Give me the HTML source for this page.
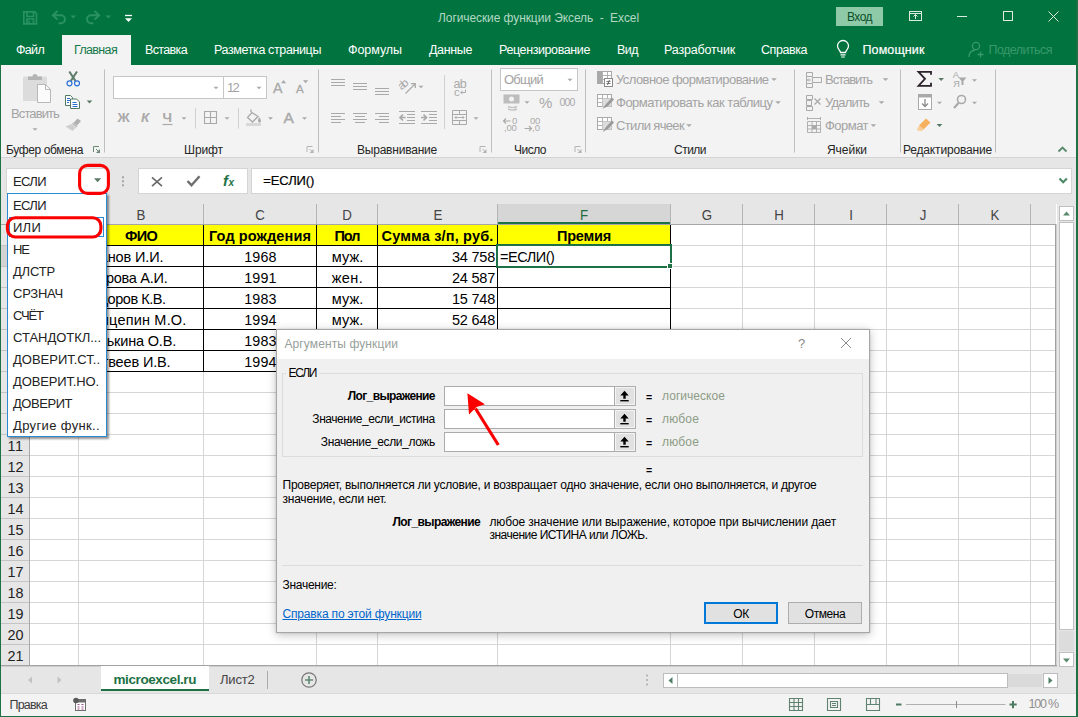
<!DOCTYPE html>
<html lang="ru"><head><meta charset="utf-8"><title>Логические функции Эксель - Excel</title>
<style>
html,body{margin:0;padding:0;}
html{width:1078px;height:717px;overflow:hidden;}
body{width:1078px;height:717px;overflow:hidden;position:relative;background:#fff;font-family:"Liberation Sans", "DejaVu Sans", sans-serif;font-size:12px;}
.a{position:absolute;box-sizing:border-box;}
.t{white-space:nowrap;}
svg{position:absolute;overflow:visible;}
</style></head><body>
<div class="a" style="left:0px;top:0px;width:1078px;height:65px;background:#01733e;"></div>
<svg style="left:0;top:0" width="140" height="34" viewBox="0 0 140 34">
<g fill="none" stroke="#2a9163" stroke-width="1.700">
<path d="M23.800 11.800h11l1.700 1.700v10.300h-12.700z"/><path d="M27 12v4.500h6.500v-4.500"/><path d="M27 23.500v-4.500h6.500v4.500"/><path d="M29 20.500v2.500" stroke-width="1.500"/>
</g>
<g fill="none" stroke="#2a9163" stroke-width="2">
<path d="M57.500 11l-4.700 4.300 4.700 4.300"/><path d="M53.500 15.300h7.500a4 4 0 0 1 0 8h-2.500"/>
<path d="M94.500 11l4.700 4.300-4.700 4.300"/><path d="M98.500 15.300h-7.500a4 4 0 0 0 0 8h2.500"/>
</g>
<path d="M70.500 15.500h5.600l-2.800 3z" fill="#2a9163"/><path d="M105.500 15.500h5.600l-2.800 3z" fill="#2a9163"/>
<path d="M125 15.500h7" stroke="#fff" stroke-width="1.300"/><path d="M125 18.300h7l-3.500 3.700z" fill="#fff"/>
</svg>
<div class="a t" style="top:7.90px;line-height:20px;font-size:12px;color:#b2d8c3;left:238.5px;width:600px;text-align:center;letter-spacing:-0.085px;white-space:pre;"><span id="t1">Логические функции Эксель  -  Excel</span></div>
<div class="a" style="left:836px;top:7px;width:47px;height:19px;background:#8ecaa8;"></div>
<div class="a t" style="top:6.50px;line-height:20px;font-size:12px;color:#0b4e2a;left:642.5px;width:434px;text-align:center;letter-spacing:-0.539px;"><span id="t2">Вход</span></div>
<svg style="left:905px;top:6px" width="160" height="22" viewBox="0 0 160 22">
<g fill="none" stroke="#d9ece2" stroke-width="1">
<rect x="4.500" y="5.500" width="12" height="9"/><path d="M4.500 7.500h12"/><path d="M10.500 13v-4.500M8.500 10.500l2-2 2 2"/>
<path d="M52 10.500h10"/>
<rect x="98.500" y="5.500" width="9" height="9"/>
<path d="M143.500 5.500l10 10M153.500 5.500l-10 10"/>
</g></svg>
<div class="a" style="left:62px;top:35px;width:69px;height:31px;background:#f3f3f3;"></div>
<div class="a t" style="top:40.40px;line-height:20px;font-size:12.5px;color:#fff;left:16px;letter-spacing:-0.684px;"><span id="t3">Файл</span></div>
<div class="a t" style="top:40.40px;line-height:20px;font-size:12.5px;color:#13794a;left:74px;letter-spacing:-0.654px;"><span id="t4">Главная</span></div>
<div class="a t" style="top:40.40px;line-height:20px;font-size:12.5px;color:#fff;left:145px;letter-spacing:-0.638px;"><span id="t5">Вставка</span></div>
<div class="a t" style="top:40.40px;line-height:20px;font-size:12.5px;color:#fff;left:214px;letter-spacing:-0.377px;"><span id="t6">Разметка страницы</span></div>
<div class="a t" style="top:40.40px;line-height:20px;font-size:12.5px;color:#fff;left:348px;letter-spacing:-0.058px;"><span id="t7">Формулы</span></div>
<div class="a t" style="top:40.40px;line-height:20px;font-size:12.5px;color:#fff;left:429px;letter-spacing:-0.362px;"><span id="t8">Данные</span></div>
<div class="a t" style="top:40.40px;line-height:20px;font-size:12.5px;color:#fff;left:499px;letter-spacing:-0.395px;"><span id="t9">Рецензирование</span></div>
<div class="a t" style="top:40.40px;line-height:20px;font-size:12.5px;color:#fff;left:617px;letter-spacing:-0.542px;"><span id="t10">Вид</span></div>
<div class="a t" style="top:40.40px;line-height:20px;font-size:12.5px;color:#fff;left:664px;letter-spacing:-0.173px;"><span id="t11">Разработчик</span></div>
<div class="a t" style="top:40.40px;line-height:20px;font-size:12.5px;color:#fff;left:761px;letter-spacing:-0.435px;"><span id="t12">Справка</span></div>
<svg style="left:836px;top:40px" width="14" height="19" viewBox="0 0 14 19">
<path d="M4.500 12.500c0-2-3-3.200-3-6.500a5.500 5.500 0 0 1 11 0c0 3.300-3 4.500-3 6.500z" fill="none" stroke="#fff" stroke-width="1.300"/>
<path d="M4.500 14.800h5M5.200 17h3.600" stroke="#fff" stroke-width="1.200"/></svg>
<div class="a t" style="top:40.00px;line-height:20px;font-size:12.5px;color:#fff;left:862.5px;letter-spacing:0.109px;-webkit-text-stroke:0.2px #fff;"><span id="t13">Помощник</span></div>
<svg style="left:968px;top:41px" width="17" height="18" viewBox="0 0 17 18">
<g fill="none" stroke="#38996c" stroke-width="1.300"><circle cx="8" cy="5" r="3.600"/><path d="M1 16c0-4 2.500-6.500 6-7"/><path d="M12.500 10.500v6M9.500 13.500h6"/></g></svg>
<div class="a t" style="top:40.00px;line-height:20px;font-size:12.5px;color:#38996c;left:988.5px;letter-spacing:-0.553px;"><span id="t14">Поделиться</span></div>
<div class="a" style="left:0px;top:65px;width:1078px;height:92px;background:#f3f3f3;"></div>
<div class="a" style="left:0px;top:157px;width:1078px;height:1px;background:#d4d4d4;"></div>
<svg style="left:0;top:0" width="1078" height="160" viewBox="0 0 1078 160"><path d="M104.5 69.500V152.500" stroke="#bebebe" stroke-width="1"/><path d="M318.5 69.500V152.500" stroke="#bebebe" stroke-width="1"/><path d="M491.5 69.500V152.500" stroke="#bebebe" stroke-width="1"/><path d="M585.5 69.500V152.500" stroke="#bebebe" stroke-width="1"/><path d="M794.5 69.500V152.500" stroke="#bebebe" stroke-width="1"/><path d="M900.5 69.500V152.500" stroke="#bebebe" stroke-width="1"/><path d="M995.5 69.500V152.500" stroke="#bebebe" stroke-width="1"/><path d="M444.500 75V129M195.500 108V128.500M238.500 108V128.500" stroke="#d0d0d0" stroke-width="1"/><path d="M93.5 152V146.500H99.0M96.0 149l3.500 3.500" fill="none" stroke="#6b8876" stroke-width="1"/><path d="M100.0 149v4h-4z" fill="#6b8876"/><path d="M307 152V146.500H312.5M309.5 149l3.500 3.500" fill="none" stroke="#b4b4b4" stroke-width="1"/><path d="M313.5 149v4h-4z" fill="#b4b4b4"/><path d="M480 152V146.500H485.5M482.5 149l3.500 3.500" fill="none" stroke="#b4b4b4" stroke-width="1"/><path d="M486.5 149v4h-4z" fill="#b4b4b4"/><path d="M575 152V146.500H580.5M577.5 149l3.500 3.500" fill="none" stroke="#b4b4b4" stroke-width="1"/><path d="M581.5 149v4h-4z" fill="#b4b4b4"/><rect x="23" y="76.500" width="24" height="24.500" rx="1" fill="#dcdcdc"/><path d="M28 80v-3.500h4.500a2.500 2.500 0 0 1 5 0h4.500v3.500z" fill="#b4b4b4"/><path d="M37.500 84.500h8l5 5v13h-13z" fill="#fbfbfb" stroke="#b8b8b8" stroke-width="1"/><path d="M45.500 84.500v5h5" fill="none" stroke="#b8b8b8"/><path d="M32.5 128.25h5.0l-2.5 2.5z" fill="#a9a9a9"/><path d="M69.300 71.500l6.200 9.500M77 71.500l-6.200 9.500" stroke="#5f7d6b" stroke-width="2.100" fill="none"/><circle cx="69.500" cy="83.300" r="2.500" fill="#f3f3f3" stroke="#2b70d9" stroke-width="1.200"/><circle cx="77" cy="83.300" r="2.500" fill="#f3f3f3" stroke="#2b70d9" stroke-width="1.200"/><path d="M65.500 95.500h5l2 2v8h-7z" fill="#fff" stroke="#4f7a60" stroke-width="1"/><path d="M67 98.500h3M67 100.500h3M67 102.500h2" stroke="#2b6fd0" stroke-width="1"/><path d="M70.500 99h6l3 3v6.500h-9z" fill="#fff" stroke="#4f7a60" stroke-width="1"/><path d="M72.500 102.500h4M72.500 104.500h5M72.500 106.500h5" stroke="#2b6fd0" stroke-width="1"/><path d="M86.7 100.6h5.6l-2.8 2.8z" fill="#5b7a66"/><path d="M77.500 118.500l3.500 2.500-4 4.500-3.500-2.500z" fill="#b0b0b0"/><path d="M73 122.500l4.500 3.500-1 1.500-4.500-3.500z" fill="#bcbcbc"/><path d="M71.500 124l4.500 3.500-3.500 3.500-7-4.500z" fill="#cfcfcf"/><rect x="113.500" y="76.500" width="110" height="22" fill="#fff" stroke="#c6c6c6"/><rect x="223.500" y="76.500" width="43" height="22" fill="#fff" stroke="#c6c6c6"/><path d="M213.5 86.75h5.0l-2.5 2.5z" fill="#a9a9a9"/><path d="M256.5 86.75h5.0l-2.5 2.5z" fill="#a9a9a9"/><path d="M281 83.300l2.600-3.300 2.600 3.300zM303 80.300h5.200l-2.600 3z" fill="#a9a9a9"/><path d="M162.500 124.500h10" stroke="#a9a9a9" stroke-width="1.200"/><path d="M181.5 117.25h5.0l-2.5 2.5z" fill="#a9a9a9"/><path d="M204.500 111.500h12v12h-12zM210.500 111.500v12M204.500 117.500h12" fill="none" stroke="#a9a9a9" stroke-width="1.100"/><path d="M224.5 117.25h5.0l-2.5 2.5z" fill="#a9a9a9"/><path d="M252 112.500l-4.500 5 5 4.500 5.500-5.500zM251 112v-2.500" fill="none" stroke="#a9a9a9" stroke-width="1.300"/><path d="M259 117c1.500 2 2 3 2 4a1.500 1.500 0 0 1-3 0c0-1 .5-2 1-4z" fill="#a9a9a9"/><rect x="246" y="123" width="15" height="3" fill="#d8d8d8"/><path d="M268.0 117.25h5.0l-2.5 2.5z" fill="#a9a9a9"/><path d="M302.0 117.25h5.0l-2.5 2.5z" fill="#a9a9a9"/><path d="M331 79.5h14M331 82.5h14M331 85.5h14" stroke="#a9a9a9" stroke-width="1" fill="none"/><path d="M353 83.5h14M353 86.5h14M353 89.5h14" stroke="#a9a9a9" stroke-width="1" fill="none"/><path d="M375 88.5h14M375 91.5h14M375 94.5h14" stroke="#a9a9a9" stroke-width="1" fill="none"/><path d="M331 113.5h14M331 116.5h10M331 119.5h14M331 122.5h10" stroke="#a9a9a9" stroke-width="1" fill="none"/><path d="M353.0 113.5h14M355.0 116.5h10M353.0 119.5h14M355.0 122.5h10" stroke="#a9a9a9" stroke-width="1" fill="none"/><path d="M375 113.5h14M379 116.5h10M375 119.5h14M379 122.5h10" stroke="#a9a9a9" stroke-width="1" fill="none"/><path d="M399 111.500h16M407 114.500h8M407 117.500h8M407 120.500h8M399 123.500h16" stroke="#a9a9a9" fill="none"/><path d="M405.500 117.500h-5.500M403 114.500l-3 3 3 3" stroke="#a9a9a9" fill="none" stroke-width="1.700"/><path d="M421 111.500h16M429 114.500h8M429 117.500h8M429 120.500h8M421 123.500h16" stroke="#a9a9a9" fill="none"/><path d="M421 117.500h5.500M423.500 114.500l3 3-3 3" stroke="#a9a9a9" fill="none" stroke-width="1.700"/><path d="M405.500 93.500l9.500-9.500M411 83.700h4.300v4.300" stroke="#a9a9a9" fill="none" stroke-width="1.200"/><path d="M418.5 85.75h5.0l-2.5 2.5z" fill="#a9a9a9"/><path d="M465.500 89.500v3h-4.500M462.500 91l-1.800 1.500 1.800 1.500" stroke="#a9a9a9" fill="none" stroke-width="1"/><path d="M452.500 110.500h14v14h-14zM452.500 114.500h14M452.500 120.500h14M459.500 110.500v4M459.500 120.500v4" fill="none" stroke="#a9a9a9"/><path d="M455 117.500h9M456.500 116l-1.500 1.500 1.500 1.500M462.500 116l1.500 1.500-1.500 1.500" fill="none" stroke="#a9a9a9" stroke-width="0.900"/><path d="M473.5 117.25h5.0l-2.5 2.5z" fill="#a9a9a9"/><rect x="500.500" y="68.500" width="77" height="22" fill="#fff" stroke="#c6c6c6"/><path d="M567.5 78.75h5.0l-2.5 2.5z" fill="#a9a9a9"/><rect x="503.500" y="94.500" width="16" height="9" fill="#bdbdbd"/><circle cx="511.500" cy="99" r="2.500" fill="#f3f3f3"/><path d="M508 106.500c3 1.500 6 1.500 9 0M508 109c3 1.500 6 1.500 9 0" stroke="#c4c4c4" fill="none" stroke-width="1.400"/><path d="M524.5 101.25h5.0l-2.5 2.5z" fill="#a9a9a9"/><path d="M503.500 121h7M506 118.500l-2.500 2.500 2.500 2.500" stroke="#a9a9a9" fill="none" stroke-width="1.200"/><path d="M524.500 128.500h7M529 126l2.500 2.500-2.500 2.500" stroke="#a9a9a9" fill="none" stroke-width="1.200"/><rect x="597.5" y="71.5" width="14" height="12" fill="#fff" stroke="#a9a9a9"/><path d="M597.5 75.5h14M597.5 79.5h14M602.5 71.5v12M607.5 71.5v12" stroke="#a9a9a9" fill="none" stroke-width="0.900"/><rect x="598" y="72" width="4" height="11" fill="#a9a9a9"/><rect x="604.5" y="78.5" width="8" height="8" fill="#fff" stroke="#8a8a8a"/><path d="M606.5 81.5h4M606.5 83.5h4M609.5 80l-2 5" stroke="#666" stroke-width="0.900"/><rect x="597.5" y="94.5" width="14" height="12" fill="#fff" stroke="#a9a9a9"/><path d="M597.5 98.5h14M597.5 102.5h14M602.5 94.5v12M607.5 94.5v12" stroke="#a9a9a9" fill="none" stroke-width="0.900"/><rect x="602.5" y="98.5" width="9" height="8" fill="#dcdcdc"/><path d="M612 97.5l-6 6.500-3.500 5 5.500-3 6-6.500z" fill="#9a9a9a"/><rect x="597.5" y="117.5" width="14" height="12" fill="#fff" stroke="#a9a9a9"/><path d="M597.5 121.5h14M597.5 125.5h14M602.5 117.5v12M607.5 117.5v12" stroke="#a9a9a9" fill="none" stroke-width="0.900"/><rect x="602.5" y="121.5" width="9" height="8" fill="#dcdcdc"/><path d="M612 120.5l-6 6.500-3.500 5 5.500-3 6-6.500z" fill="#9a9a9a"/><path d="M771.2 78.19999999999999h5.6l-2.8 2.8z" fill="#a9a9a9"/><path d="M775.2 101.19999999999999h5.6l-2.8 2.8z" fill="#a9a9a9"/><path d="M686.2 124.19999999999999h5.6l-2.8 2.8z" fill="#a9a9a9"/><path d="M806.500 72.500h6v4h-6zM806.500 83.500h6v4h-6zM812.500 77.500h9v5h-9zM806.500 76.500v7" fill="none" stroke="#a9a9a9"/><path d="M811 80h-4M809 78.500l-1.500 1.500 1.500 1.500" stroke="#a9a9a9" fill="none" stroke-width="0.900"/><path d="M806.500 95.500h6v4h-6zM806.500 106.500h6v4h-6zM806.500 100.500h5v5h-5z" fill="none" stroke="#a9a9a9"/><path d="M814.500 98.500l6 6M820.500 98.500l-6 6" stroke="#a9a9a9" stroke-width="1.300"/><path d="M807.500 121.500h13v11h-13zM807.500 125.500h13M807.500 129h13M812 121.500v11M816.500 121.500v11" fill="none" stroke="#a9a9a9" stroke-width="0.900"/><path d="M807 118.500h14M807.500 117v3M820.500 117v3" stroke="#a9a9a9" stroke-width="0.900" fill="none"/><rect x="812" y="125.500" width="4.500" height="3.500" fill="#a9a9a9"/><path d="M882.7 78.19999999999999h5.6l-2.8 2.8z" fill="#a9a9a9"/><path d="M878.7 101.19999999999999h5.6l-2.8 2.8z" fill="#a9a9a9"/><path d="M870.6 124.19999999999999h5.6l-2.8 2.8z" fill="#a9a9a9"/><path d="M931 74.800v-3h-12.500l6.500 7-6.500 7h12.500v-3" fill="none" stroke="#2b222b" stroke-width="1.800"/><path d="M938.4000000000001 78.1h5.6l-2.8 2.8z" fill="#5b7a66"/><path d="M958.500 77.500h8l-3 3.500v4h-2v-4z" fill="#a9a9a9"/><path d="M972.0 79.25h5.0l-2.5 2.5z" fill="#a9a9a9"/><rect x="918.500" y="94.500" width="13" height="15" fill="#fff" stroke="#a9a9a9"/><rect x="918.500" y="94.500" width="13" height="3" fill="#a9a9a9"/><path d="M925 99v7M922 103.500l3 3 3-3" stroke="#8a8a8a" fill="none" stroke-width="1.300"/><path d="M937.0 101.75h5.0l-2.5 2.5z" fill="#a9a9a9"/><circle cx="961.500" cy="99.500" r="4" fill="none" stroke="#a9a9a9" stroke-width="1.600"/><path d="M958.500 103l-4.500 5" stroke="#a9a9a9" stroke-width="2.200"/><path d="M972.0 101.75h5.0l-2.5 2.5z" fill="#a9a9a9"/><path d="M926 118.500l4.500 4-7 7-4.500-4z" fill="#f6b05e"/><path d="M919 125.500l4.500 4-1.500 1.500h-3.500l-1.500-1.500z" fill="#f9cf9c"/><path d="M936.7 124.1h5.6l-2.8 2.8z" fill="#4f7a62"/><path d="M1058.500 151.500l4-4 4 4" fill="none" stroke="#5c8a70" stroke-width="1.900"/></svg>
<div class="a t" style="top:104.00px;line-height:20px;font-size:13px;color:#a3a3a3;left:11px;letter-spacing:-0.889px;"><span id="t15">Вставить</span></div>
<div class="a t" style="top:77.50px;line-height:20px;font-size:13px;color:#a3a3a3;left:227px;letter-spacing:-1.734px;"><span id="t16">12</span></div>
<div class="a t" style="top:78.30px;line-height:20px;font-size:14.2px;color:#a9a9a9;left:273px;letter-spacing:0.531px;-webkit-text-stroke:0.3px #a9a9a9;"><span id="t17">A</span></div>
<div class="a t" style="top:79.30px;line-height:20px;font-size:11.6px;color:#a9a9a9;left:296px;letter-spacing:0.766px;-webkit-text-stroke:0.3px #a9a9a9;"><span id="t18">A</span></div>
<div class="a t" style="top:108.00px;line-height:20px;font-size:13.5px;color:#a9a9a9;font-weight:700;left:117.5px;letter-spacing:0.297px;"><span id="t19">Ж</span></div>
<div class="a t" style="top:108.00px;line-height:20px;font-size:13.5px;color:#a9a9a9;font-weight:700;font-style:italic;left:141px;letter-spacing:0.188px;"><span id="t20">К</span></div>
<div class="a t" style="top:107.50px;line-height:20px;font-size:13.5px;color:#a9a9a9;font-weight:700;left:162.5px;letter-spacing:0.500px;"><span id="t21">Ч</span></div>
<div class="a t" style="top:108.00px;line-height:20px;font-size:15.5px;color:#a9a9a9;left:283.5px;letter-spacing:0.156px;-webkit-text-stroke:0.45px #a9a9a9;"><span id="t22">A</span></div>
<div class="a t" style="top:74.50px;line-height:20px;font-size:11.5px;color:#a9a9a9;left:397.5px;letter-spacing:-2.508px;transform:rotate(-40deg);"><span id="t23">ab</span></div>
<div class="a t" style="top:73.50px;line-height:20px;font-size:12.5px;color:#a9a9a9;left:453.5px;letter-spacing:-0.703px;"><span id="t24">ab</span></div>
<div class="a t" style="top:81.50px;line-height:20px;font-size:11.5px;color:#a9a9a9;left:454px;"><span id="t25">c</span></div>
<div class="a t" style="top:70.00px;line-height:20px;font-size:13px;color:#a3a3a3;left:504px;letter-spacing:-0.756px;"><span id="t26">Общий</span></div>
<div class="a t" style="top:92.50px;line-height:20px;font-size:15px;color:#a9a9a9;left:539px;letter-spacing:-0.344px;"><span id="t27">%</span></div>
<div class="a t" style="top:91.80px;line-height:20px;font-size:10.5px;color:#a9a9a9;left:559.5px;letter-spacing:-0.844px;"><span id="t28">000</span></div>
<div class="a t" style="top:111.20px;line-height:20px;font-size:9.5px;color:#a9a9a9;left:512px;letter-spacing:-0.297px;"><span id="t29">0</span></div>
<div class="a t" style="top:118.30px;line-height:20px;font-size:9.5px;color:#a9a9a9;left:504px;letter-spacing:-0.240px;"><span id="t30">,00</span></div>
<div class="a t" style="top:111.20px;line-height:20px;font-size:9.5px;color:#a9a9a9;left:530px;letter-spacing:-0.289px;"><span id="t31">00</span></div>
<div class="a t" style="top:118.30px;line-height:20px;font-size:9.5px;color:#a9a9a9;left:532px;letter-spacing:0.031px;"><span id="t32">,0</span></div>
<div class="a t" style="top:70.00px;line-height:20px;font-size:13px;color:#a3a3a3;left:616px;letter-spacing:-0.560px;"><span id="t33">Условное форматирование</span></div>
<div class="a t" style="top:93.00px;line-height:20px;font-size:13px;color:#a3a3a3;left:616px;letter-spacing:-0.506px;"><span id="t34">Форматировать как таблицу</span></div>
<div class="a t" style="top:116.00px;line-height:20px;font-size:13px;color:#a3a3a3;left:616px;letter-spacing:-0.639px;"><span id="t35">Стили ячеек</span></div>
<div class="a t" style="top:70.00px;line-height:20px;font-size:13px;color:#a3a3a3;left:825px;letter-spacing:-1.014px;"><span id="t36">Вставить</span></div>
<div class="a t" style="top:93.00px;line-height:20px;font-size:13px;color:#a3a3a3;left:825px;letter-spacing:-0.806px;"><span id="t37">Удалить</span></div>
<div class="a t" style="top:116.00px;line-height:20px;font-size:13px;color:#a3a3a3;left:825px;letter-spacing:-0.531px;"><span id="t38">Формат</span></div>
<div class="a t" style="top:65.20px;line-height:20px;font-size:9.5px;color:#a9a9a9;left:952.8px;"><span id="t39">А</span></div>
<div class="a t" style="top:74.00px;line-height:20px;font-size:9.5px;color:#a9a9a9;left:953px;"><span id="t40">Я</span></div>
<div class="a t" style="top:139.60px;line-height:20px;font-size:12px;color:#262626;left:6px;letter-spacing:-0.379px;"><span id="t41">Буфер обмена</span></div>
<div class="a t" style="top:139.60px;line-height:20px;font-size:12px;color:#262626;left:184px;letter-spacing:-0.097px;"><span id="t42">Шрифт</span></div>
<div class="a t" style="top:139.60px;line-height:20px;font-size:12px;color:#262626;left:357px;letter-spacing:-0.217px;"><span id="t43">Выравнивание</span></div>
<div class="a t" style="top:139.60px;line-height:20px;font-size:12px;color:#262626;left:514px;letter-spacing:-0.503px;"><span id="t44">Число</span></div>
<div class="a t" style="top:139.60px;line-height:20px;font-size:12px;color:#262626;left:674px;letter-spacing:-0.516px;"><span id="t45">Стили</span></div>
<div class="a t" style="top:139.60px;line-height:20px;font-size:12px;color:#262626;left:827px;letter-spacing:-0.042px;"><span id="t46">Ячейки</span></div>
<div class="a t" style="top:139.60px;line-height:20px;font-size:12px;color:#262626;left:903px;letter-spacing:-0.173px;"><span id="t47">Редактирование</span></div>
<div class="a" style="left:0px;top:158px;width:1078px;height:46px;background:#e6e6e6;"></div>
<div class="a" style="left:6px;top:168px;width:102px;height:26px;background:#fff;border:1px solid #d4d4d4;"></div>
<div class="a t" style="top:171.80px;line-height:20px;font-size:13px;color:#222;left:13px;letter-spacing:-0.629px;"><span id="t48">ЕСЛИ</span></div>
<div class="a" style="left:138px;top:168px;width:110px;height:26px;background:#fff;border:1px solid #d4d4d4;"></div>
<div class="a" style="left:251px;top:168px;width:821px;height:26px;background:#fff;border:1px solid #d4d4d4;"></div>
<div class="a t" style="top:171.30px;line-height:20px;font-size:13px;color:#000;left:263.3px;letter-spacing:-0.109px;-webkit-text-stroke:0.2px #000;"><span id="t49">=ЕСЛИ()</span></div>
<svg style="left:0;top:160px" width="1078" height="40" viewBox="0 160 1078 40">
<path d="M94 178.200h7.200l-3.600 4z" fill="#5b7a66"/>
<path d="M122 176.300h2v2h-2zM122 180.300h2v2h-2zM122 184.300h2v2h-2z" fill="#a6a6a6"/>
<path d="M152 177.300l10 8.800M162 177.300l-10 8.800" stroke="#6a6a6a" stroke-width="1.700" fill="none"/>
<path d="M187.500 181l4 4.200 8-9" stroke="#6e6e6e" stroke-width="2.400" fill="none"/>
<path d="M1059.500 178.500l3.700 3.700 3.700-3.700" stroke="#4e8a68" stroke-width="2.200" fill="none"/>
</svg>
<div class="a t" style="top:170.50px;line-height:20px;font-size:15px;color:#1e7145;font-weight:700;font-style:italic;left:223px;font-family:"Liberation Serif",serif;"><span id="t50">f</span></div>
<div class="a t" style="top:173.00px;line-height:20px;font-size:10px;color:#1e7145;font-weight:700;font-style:italic;left:228.5px;font-family:"Liberation Serif",serif;"><span id="t51">x</span></div>
<div class="a" style="left:0px;top:204px;width:1056px;height:21px;background:#e6e6e6;"></div><div class="a" style="left:0px;top:204px;width:30px;height:462px;background:#e6e6e6;"></div><div class="a" style="left:30px;top:225px;width:1026px;height:441px;background:#fff;"></div><div class="a" style="left:79px;top:225px;width:591px;height:20px;background:#ffff00;"></div><div class="a" style="left:78px;top:225px;width:1px;height:441px;background:#d6d6d6;"></div><div class="a" style="left:203px;top:225px;width:1px;height:441px;background:#d6d6d6;"></div><div class="a" style="left:316px;top:225px;width:1px;height:441px;background:#d6d6d6;"></div><div class="a" style="left:377px;top:225px;width:1px;height:441px;background:#d6d6d6;"></div><div class="a" style="left:497px;top:225px;width:1px;height:441px;background:#d6d6d6;"></div><div class="a" style="left:670px;top:225px;width:1px;height:441px;background:#d6d6d6;"></div><div class="a" style="left:742px;top:225px;width:1px;height:441px;background:#d6d6d6;"></div><div class="a" style="left:814px;top:225px;width:1px;height:441px;background:#d6d6d6;"></div><div class="a" style="left:886px;top:225px;width:1px;height:441px;background:#d6d6d6;"></div><div class="a" style="left:958px;top:225px;width:1px;height:441px;background:#d6d6d6;"></div><div class="a" style="left:1030px;top:225px;width:1px;height:441px;background:#d6d6d6;"></div><div class="a" style="left:30px;top:245px;width:1026px;height:1px;background:#d6d6d6;"></div><div class="a" style="left:30px;top:266px;width:1026px;height:1px;background:#d6d6d6;"></div><div class="a" style="left:30px;top:287px;width:1026px;height:1px;background:#d6d6d6;"></div><div class="a" style="left:30px;top:308px;width:1026px;height:1px;background:#d6d6d6;"></div><div class="a" style="left:30px;top:329px;width:1026px;height:1px;background:#d6d6d6;"></div><div class="a" style="left:30px;top:350px;width:1026px;height:1px;background:#d6d6d6;"></div><div class="a" style="left:30px;top:371px;width:1026px;height:1px;background:#d6d6d6;"></div><div class="a" style="left:30px;top:392px;width:1026px;height:1px;background:#d6d6d6;"></div><div class="a" style="left:30px;top:413px;width:1026px;height:1px;background:#d6d6d6;"></div><div class="a" style="left:30px;top:434px;width:1026px;height:1px;background:#d6d6d6;"></div><div class="a" style="left:30px;top:455px;width:1026px;height:1px;background:#d6d6d6;"></div><div class="a" style="left:30px;top:476px;width:1026px;height:1px;background:#d6d6d6;"></div><div class="a" style="left:30px;top:497px;width:1026px;height:1px;background:#d6d6d6;"></div><div class="a" style="left:30px;top:518px;width:1026px;height:1px;background:#d6d6d6;"></div><div class="a" style="left:30px;top:539px;width:1026px;height:1px;background:#d6d6d6;"></div><div class="a" style="left:30px;top:560px;width:1026px;height:1px;background:#d6d6d6;"></div><div class="a" style="left:30px;top:581px;width:1026px;height:1px;background:#d6d6d6;"></div><div class="a" style="left:30px;top:602px;width:1026px;height:1px;background:#d6d6d6;"></div><div class="a" style="left:30px;top:623px;width:1026px;height:1px;background:#d6d6d6;"></div><div class="a" style="left:30px;top:644px;width:1026px;height:1px;background:#d6d6d6;"></div><div class="a" style="left:30px;top:665px;width:1026px;height:1px;background:#d6d6d6;"></div><div class="a" style="left:29px;top:204px;width:1px;height:20px;background:#b4b4b4;"></div><div class="a" style="left:78px;top:204px;width:1px;height:20px;background:#b4b4b4;"></div><div class="a" style="left:203px;top:204px;width:1px;height:20px;background:#b4b4b4;"></div><div class="a" style="left:316px;top:204px;width:1px;height:20px;background:#b4b4b4;"></div><div class="a" style="left:377px;top:204px;width:1px;height:20px;background:#b4b4b4;"></div><div class="a" style="left:497px;top:204px;width:1px;height:20px;background:#b4b4b4;"></div><div class="a" style="left:670px;top:204px;width:1px;height:20px;background:#b4b4b4;"></div><div class="a" style="left:742px;top:204px;width:1px;height:20px;background:#b4b4b4;"></div><div class="a" style="left:814px;top:204px;width:1px;height:20px;background:#b4b4b4;"></div><div class="a" style="left:886px;top:204px;width:1px;height:20px;background:#b4b4b4;"></div><div class="a" style="left:958px;top:204px;width:1px;height:20px;background:#b4b4b4;"></div><div class="a" style="left:1030px;top:204px;width:1px;height:20px;background:#b4b4b4;"></div><div class="a" style="left:0px;top:224px;width:29px;height:1px;background:#c4c4c4;"></div><div class="a" style="left:0px;top:245px;width:29px;height:1px;background:#c4c4c4;"></div><div class="a" style="left:0px;top:266px;width:29px;height:1px;background:#c4c4c4;"></div><div class="a" style="left:0px;top:287px;width:29px;height:1px;background:#c4c4c4;"></div><div class="a" style="left:0px;top:308px;width:29px;height:1px;background:#c4c4c4;"></div><div class="a" style="left:0px;top:329px;width:29px;height:1px;background:#c4c4c4;"></div><div class="a" style="left:0px;top:350px;width:29px;height:1px;background:#c4c4c4;"></div><div class="a" style="left:0px;top:371px;width:29px;height:1px;background:#c4c4c4;"></div><div class="a" style="left:0px;top:392px;width:29px;height:1px;background:#c4c4c4;"></div><div class="a" style="left:0px;top:413px;width:29px;height:1px;background:#c4c4c4;"></div><div class="a" style="left:0px;top:434px;width:29px;height:1px;background:#c4c4c4;"></div><div class="a" style="left:0px;top:455px;width:29px;height:1px;background:#c4c4c4;"></div><div class="a" style="left:0px;top:476px;width:29px;height:1px;background:#c4c4c4;"></div><div class="a" style="left:0px;top:497px;width:29px;height:1px;background:#c4c4c4;"></div><div class="a" style="left:0px;top:518px;width:29px;height:1px;background:#c4c4c4;"></div><div class="a" style="left:0px;top:539px;width:29px;height:1px;background:#c4c4c4;"></div><div class="a" style="left:0px;top:560px;width:29px;height:1px;background:#c4c4c4;"></div><div class="a" style="left:0px;top:581px;width:29px;height:1px;background:#c4c4c4;"></div><div class="a" style="left:0px;top:602px;width:29px;height:1px;background:#c4c4c4;"></div><div class="a" style="left:0px;top:623px;width:29px;height:1px;background:#c4c4c4;"></div><div class="a" style="left:0px;top:644px;width:29px;height:1px;background:#c4c4c4;"></div><div class="a" style="left:0px;top:665px;width:29px;height:1px;background:#c4c4c4;"></div><div class="a" style="left:29px;top:225px;width:1px;height:441px;background:#a8a8a8;"></div><div class="a" style="left:0px;top:224px;width:1056px;height:1px;background:#a6a6a6;"></div><div class="a" style="left:498px;top:204px;width:172px;height:20px;background:#d6d6d6;"></div><div class="a" style="left:498px;top:222px;width:172px;height:2px;background:#1e7145;"></div><div class="a" style="left:0px;top:246px;width:29px;height:20px;background:#d3d3d3;"></div><div class="a" style="left:27px;top:246px;width:2px;height:20px;background:#1e7145;"></div><div class="a t" style="top:205.20px;line-height:20px;font-size:14.3px;color:#444;left:2.0px;width:104px;text-align:center;transform:scaleX(.93);"><span id="t52">A</span></div><div class="a t" style="top:205.20px;line-height:20px;font-size:14.3px;color:#444;left:2.0px;width:278px;text-align:center;transform:scaleX(.93);"><span id="t53">B</span></div><div class="a t" style="top:205.20px;line-height:20px;font-size:14.3px;color:#444;left:2.0px;width:516px;text-align:center;transform:scaleX(.93);"><span id="t54">C</span></div><div class="a t" style="top:205.20px;line-height:20px;font-size:14.3px;color:#444;left:47.0px;width:600px;text-align:center;transform:scaleX(.93);"><span id="t55">D</span></div><div class="a t" style="top:205.20px;line-height:20px;font-size:14.3px;color:#444;left:137.5px;width:600px;text-align:center;transform:scaleX(.93);"><span id="t56">E</span></div><div class="a t" style="top:205.20px;line-height:20px;font-size:14.3px;color:#1e6b41;left:284.0px;width:600px;text-align:center;transform:scaleX(.93);"><span id="t57">F</span></div><div class="a t" style="top:205.20px;line-height:20px;font-size:14.3px;color:#444;left:406.5px;width:600px;text-align:center;transform:scaleX(.93);"><span id="t58">G</span></div><div class="a t" style="top:205.20px;line-height:20px;font-size:14.3px;color:#444;left:480.5px;width:596px;text-align:center;transform:scaleX(.93);"><span id="t59">H</span></div><div class="a t" style="top:205.20px;line-height:20px;font-size:14.3px;color:#444;left:624.5px;width:452px;text-align:center;transform:scaleX(.93);"><span id="t60">I</span></div><div class="a t" style="top:205.20px;line-height:20px;font-size:14.3px;color:#444;left:768.5px;width:308px;text-align:center;transform:scaleX(.93);"><span id="t61">J</span></div><div class="a t" style="top:205.20px;line-height:20px;font-size:14.3px;color:#444;left:912.5px;width:164px;text-align:center;transform:scaleX(.93);"><span id="t62">K</span></div><div class="a t" style="top:226.40px;line-height:20px;font-size:14.4px;color:#222;right:1054.6px;letter-spacing:0.184px;"><span id="t63">1</span></div><div class="a t" style="top:247.40px;line-height:20px;font-size:14.4px;color:#222;right:1054.6px;letter-spacing:0.184px;"><span id="t64">2</span></div><div class="a t" style="top:268.40px;line-height:20px;font-size:14.4px;color:#222;right:1054.6px;letter-spacing:0.184px;"><span id="t65">3</span></div><div class="a t" style="top:289.40px;line-height:20px;font-size:14.4px;color:#222;right:1054.6px;letter-spacing:0.184px;"><span id="t66">4</span></div><div class="a t" style="top:310.40px;line-height:20px;font-size:14.4px;color:#222;right:1054.6px;letter-spacing:0.184px;"><span id="t67">5</span></div><div class="a t" style="top:331.40px;line-height:20px;font-size:14.4px;color:#222;right:1054.6px;letter-spacing:0.184px;"><span id="t68">6</span></div><div class="a t" style="top:352.40px;line-height:20px;font-size:14.4px;color:#222;right:1054.6px;letter-spacing:0.184px;"><span id="t69">7</span></div><div class="a t" style="top:373.40px;line-height:20px;font-size:14.4px;color:#222;right:1054.6px;letter-spacing:0.184px;"><span id="t70">8</span></div><div class="a t" style="top:394.40px;line-height:20px;font-size:14.4px;color:#222;right:1054.6px;letter-spacing:0.184px;"><span id="t71">9</span></div><div class="a t" style="top:415.40px;line-height:20px;font-size:14.4px;color:#222;right:1054.6px;letter-spacing:-0.008px;"><span id="t72">10</span></div><div class="a t" style="top:436.40px;line-height:20px;font-size:14.4px;color:#222;right:1054.6px;letter-spacing:0.523px;"><span id="t73">11</span></div><div class="a t" style="top:457.40px;line-height:20px;font-size:14.4px;color:#222;right:1054.6px;letter-spacing:-0.008px;"><span id="t74">12</span></div><div class="a t" style="top:478.40px;line-height:20px;font-size:14.4px;color:#222;right:1054.6px;letter-spacing:-0.008px;"><span id="t75">13</span></div><div class="a t" style="top:499.40px;line-height:20px;font-size:14.4px;color:#222;right:1054.6px;letter-spacing:-0.008px;"><span id="t76">14</span></div><div class="a t" style="top:520.40px;line-height:20px;font-size:14.4px;color:#222;right:1054.6px;letter-spacing:-0.008px;"><span id="t77">15</span></div><div class="a t" style="top:541.40px;line-height:20px;font-size:14.4px;color:#222;right:1054.6px;letter-spacing:-0.008px;"><span id="t78">16</span></div><div class="a t" style="top:562.40px;line-height:20px;font-size:14.4px;color:#222;right:1054.6px;letter-spacing:-0.008px;"><span id="t79">17</span></div><div class="a t" style="top:583.40px;line-height:20px;font-size:14.4px;color:#222;right:1054.6px;letter-spacing:-0.008px;"><span id="t80">18</span></div><div class="a t" style="top:604.40px;line-height:20px;font-size:14.4px;color:#222;right:1054.6px;letter-spacing:-0.008px;"><span id="t81">19</span></div><div class="a t" style="top:625.40px;line-height:20px;font-size:14.4px;color:#222;right:1054.6px;letter-spacing:-0.008px;"><span id="t82">20</span></div><div class="a t" style="top:646.40px;line-height:20px;font-size:14.4px;color:#222;right:1054.6px;letter-spacing:-0.008px;"><span id="t83">21</span></div><div class="a" style="left:78px;top:225px;width:1px;height:147px;background:#000;"></div><div class="a" style="left:203px;top:225px;width:1px;height:147px;background:#000;"></div><div class="a" style="left:316px;top:225px;width:1px;height:147px;background:#000;"></div><div class="a" style="left:377px;top:225px;width:1px;height:147px;background:#000;"></div><div class="a" style="left:497px;top:225px;width:1px;height:147px;background:#000;"></div><div class="a" style="left:670px;top:225px;width:1px;height:147px;background:#000;"></div><div class="a" style="left:78px;top:245px;width:593px;height:1px;background:#000;"></div><div class="a" style="left:78px;top:266px;width:593px;height:1px;background:#000;"></div><div class="a" style="left:78px;top:287px;width:593px;height:1px;background:#000;"></div><div class="a" style="left:78px;top:308px;width:593px;height:1px;background:#000;"></div><div class="a" style="left:78px;top:329px;width:593px;height:1px;background:#000;"></div><div class="a" style="left:78px;top:350px;width:593px;height:1px;background:#000;"></div><div class="a" style="left:78px;top:371px;width:593px;height:1px;background:#000;"></div><div class="a t" style="top:226.00px;line-height:20px;font-size:14.5px;color:#000;font-weight:700;left:2.0px;width:278px;text-align:center;letter-spacing:-0.693px;"><span id="t84">ФИО</span></div><div class="a t" style="top:226.00px;line-height:20px;font-size:14.5px;color:#000;font-weight:700;left:2.0px;width:516px;text-align:center;letter-spacing:0.116px;"><span id="t85">Год рождения</span></div><div class="a t" style="top:226.00px;line-height:20px;font-size:14.5px;color:#000;font-weight:700;left:47.0px;width:600px;text-align:center;letter-spacing:-1.047px;"><span id="t86">Пол</span></div><div class="a t" style="top:226.00px;line-height:20px;font-size:14.5px;color:#000;font-weight:700;left:137.5px;width:600px;text-align:center;letter-spacing:0.169px;"><span id="t87">Сумма з/п, руб.</span></div><div class="a t" style="top:226.00px;line-height:20px;font-size:14.5px;color:#000;font-weight:700;left:284.0px;width:600px;text-align:center;letter-spacing:-0.211px;"><span id="t88">Премия</span></div><div class="a t" style="top:247.00px;line-height:20px;font-size:14.5px;color:#000;right:914.5px;letter-spacing:-0.112px;"><span id="t89">Иванов И.И.</span></div><div class="a t" style="top:247.00px;line-height:20px;font-size:14.3px;color:#000;left:2.5px;width:516px;text-align:center;letter-spacing:0.172px;"><span id="t90">1968</span></div><div class="a t" style="top:247.00px;line-height:20px;font-size:14.5px;color:#000;left:47.5px;width:600px;text-align:center;letter-spacing:0.055px;"><span id="t91">муж.</span></div><div class="a t" style="top:247.00px;line-height:20px;font-size:14.5px;color:#000;right:583px;letter-spacing:-0.227px;"><span id="t92">34 758</span></div><div class="a t" style="top:268.00px;line-height:20px;font-size:14.5px;color:#000;right:910.5px;letter-spacing:-0.255px;"><span id="t93">Петрова А.И.</span></div><div class="a t" style="top:268.00px;line-height:20px;font-size:14.3px;color:#000;left:2.5px;width:516px;text-align:center;letter-spacing:0.172px;"><span id="t94">1991</span></div><div class="a t" style="top:268.00px;line-height:20px;font-size:14.5px;color:#000;left:47.5px;width:600px;text-align:center;letter-spacing:0.422px;"><span id="t95">жен.</span></div><div class="a t" style="top:268.00px;line-height:20px;font-size:14.5px;color:#000;right:583px;letter-spacing:-0.227px;"><span id="t96">24 587</span></div><div class="a t" style="top:289.00px;line-height:20px;font-size:14.5px;color:#000;right:912.5px;letter-spacing:-0.470px;"><span id="t97">Сидоров К.В.</span></div><div class="a t" style="top:289.00px;line-height:20px;font-size:14.3px;color:#000;left:2.5px;width:516px;text-align:center;letter-spacing:0.172px;"><span id="t98">1983</span></div><div class="a t" style="top:289.00px;line-height:20px;font-size:14.5px;color:#000;left:47.5px;width:600px;text-align:center;letter-spacing:0.055px;"><span id="t99">муж.</span></div><div class="a t" style="top:289.00px;line-height:20px;font-size:14.5px;color:#000;right:583px;letter-spacing:-0.227px;"><span id="t100">15 748</span></div><div class="a t" style="top:310.00px;line-height:20px;font-size:14.5px;color:#000;right:891.5px;letter-spacing:0.177px;"><span id="t101">Прицепин М.О.</span></div><div class="a t" style="top:310.00px;line-height:20px;font-size:14.3px;color:#000;left:2.5px;width:516px;text-align:center;letter-spacing:0.172px;"><span id="t102">1994</span></div><div class="a t" style="top:310.00px;line-height:20px;font-size:14.5px;color:#000;left:47.5px;width:600px;text-align:center;letter-spacing:0.055px;"><span id="t103">муж.</span></div><div class="a t" style="top:310.00px;line-height:20px;font-size:14.5px;color:#000;right:583px;letter-spacing:-0.227px;"><span id="t104">52 648</span></div><div class="a t" style="top:331.00px;line-height:20px;font-size:14.5px;color:#000;right:902px;letter-spacing:-0.181px;"><span id="t105">Редькина О.В.</span></div><div class="a t" style="top:331.00px;line-height:20px;font-size:14.3px;color:#000;left:2.5px;width:516px;text-align:center;letter-spacing:0.172px;"><span id="t106">1983</span></div><div class="a t" style="top:331.00px;line-height:20px;font-size:14.5px;color:#000;left:47.5px;width:600px;text-align:center;letter-spacing:0.422px;"><span id="t107">жен.</span></div><div class="a t" style="top:331.00px;line-height:20px;font-size:14.5px;color:#000;right:583px;letter-spacing:-0.227px;"><span id="t108">41 200</span></div><div class="a t" style="top:352.00px;line-height:20px;font-size:14.5px;color:#000;right:907.5px;letter-spacing:-0.141px;"><span id="t109">Матвеев И.В.</span></div><div class="a t" style="top:352.00px;line-height:20px;font-size:14.3px;color:#000;left:2.5px;width:516px;text-align:center;letter-spacing:0.172px;"><span id="t110">1994</span></div><div class="a t" style="top:352.00px;line-height:20px;font-size:14.5px;color:#000;left:47.5px;width:600px;text-align:center;letter-spacing:0.055px;"><span id="t111">муж.</span></div><div class="a t" style="top:352.00px;line-height:20px;font-size:14.5px;color:#000;right:583px;letter-spacing:-0.227px;"><span id="t112">38 950</span></div><div class="a t" style="top:247.00px;line-height:20px;font-size:14.5px;color:#000;left:500px;letter-spacing:-0.462px;"><span id="t113">=ЕСЛИ()</span></div><div class="a" style="left:496px;top:244px;width:176px;height:24px;border:2px solid #1e7145;"></div><div class="a" style="left:667px;top:263px;width:6px;height:6px;background:#1e7145;border:1px solid #fff;"></div><div class="a" style="left:1055px;top:224px;width:1px;height:442px;background:#a0a0a0;"></div><div class="a" style="left:1056px;top:224px;width:1px;height:442px;background:#cfcfcf;"></div><div class="a" style="left:0px;top:665px;width:1057px;height:1px;background:#a3a3a3;"></div><div class="a" style="left:0px;top:666px;width:1057px;height:1px;background:#cdcdcd;"></div><div class="a" style="left:1057px;top:204px;width:21px;height:463px;background:#e6e6e6;"></div><div class="a" style="left:1059px;top:206px;width:15px;height:15px;background:#fff;border:1px solid #c0c0c0;"></div><div class="a" style="left:1059px;top:222px;width:15px;height:408px;background:#fff;border:1px solid #c0c0c0;"></div><div class="a" style="left:1059px;top:631px;width:15px;height:20px;background:#dcdcdc;"></div><div class="a" style="left:1059px;top:652px;width:15px;height:15px;background:#fff;border:1px solid #c0c0c0;"></div><svg style="left:1059px;top:206px" width="15" height="461" viewBox="0 0 15 461"><path d="M4 9.500h7l-3.500-4zM4 452.500h7l-3.500 4z" fill="#5a8a6e"/></svg>
<div class="a" style="left:0px;top:667px;width:1078px;height:27px;background:#e6e6e6;"></div>
<div class="a" style="left:101px;top:666px;width:108px;height:25px;background:#fff;"></div>
<div class="a" style="left:101px;top:689px;width:108px;height:2px;background:#1e7145;"></div>
<div class="a t" style="top:669.50px;line-height:20px;font-size:13.5px;color:#1e7145;font-weight:700;left:113.5px;letter-spacing:-0.407px;"><span id="t114">microexcel.ru</span></div>
<div class="a t" style="top:669.50px;line-height:20px;font-size:13px;color:#444;left:220px;letter-spacing:-0.197px;"><span id="t115">Лист2</span></div>
<div class="a" style="left:267px;top:671px;width:1px;height:18px;background:#ababab;"></div>
<svg style="left:0;top:667px" width="1078" height="50" viewBox="0 667 1078 50">
<path d="M32 676.500v7l-4-3.500zM57.500 676.500v7l4-3.500z" fill="#c2c2c2"/>
<circle cx="309" cy="680" r="7.200" fill="none" stroke="#767676" stroke-width="1.200"/>
<path d="M305 680h8M309 676v8" stroke="#5f8a72" stroke-width="1.600"/>
<circle cx="647" cy="675.500" r="1" fill="#a8a8a8"/><circle cx="647" cy="680" r="1" fill="#a8a8a8"/><circle cx="647" cy="684.500" r="1" fill="#a8a8a8"/>
<rect x="663.500" y="673.500" width="14" height="14" fill="#fff" stroke="#bdbdbd"/>
<rect x="677.500" y="673.500" width="330" height="14" fill="#fff" stroke="#bdbdbd"/>
<rect x="1008" y="674" width="34" height="13" fill="#dadada"/>
<rect x="1043.500" y="673.500" width="14" height="14" fill="#fff" stroke="#bdbdbd"/>
<path d="M672.500 677v7l-4-3.500zM1048.500 677v7l4-3.500z" fill="#4f7f66"/>
</svg>
<div class="a" style="left:0px;top:694px;width:1078px;height:23px;background:#f3f3f3;"></div>
<div class="a" style="left:0px;top:693px;width:1078px;height:1px;background:#d8d8d8;"></div>
<div class="a t" style="top:694.60px;line-height:20px;font-size:12.5px;color:#3c3c3c;left:9.5px;letter-spacing:-0.789px;"><span id="t116">Правка</span></div>
<svg style="left:0;top:694px" width="1078" height="23" viewBox="0 694 1078 23">
<rect x="75.500" y="699.500" width="10" height="11" fill="#fff" stroke="#6e6e6e"/><rect x="75" y="699" width="11" height="3.500" fill="#6e6e6e"/>
<path d="M77.500 704.500h2M81.500 704.500h2M77.500 707h2M81.500 707h2M77.500 709h2M81.500 709h2" stroke="#a0508c" stroke-width="1.200"/>
<circle cx="76" cy="700.500" r="2.800" fill="#5a5a5a"/>
<g fill="none" stroke="#5f8370" stroke-width="1.100">
<path d="M789.500 698.500h13v12h-13zM789.500 702.500h13M789.500 706.500h13M794 698.500v12M798.500 698.500v12"/>
<path d="M827.500 698.500h13v12h-13zM830.500 701.500h7v6h-7zM832 703.500h4M832 705.500h4"/>
<path d="M866.500 698.500h13v12h-13zM870.500 698.500v6h5.500v-6M866.500 704.500h13"/>
</g>
<path d="M896 704.500h5.500" stroke="#4f7a62" stroke-width="2"/>
<path d="M906 704.500h99.500" stroke="#b0b0b0" stroke-width="1"/>
<path d="M956.500 701v7" stroke="#8a8a8a" stroke-width="1"/>
<path d="M1009.500 704.500h7.200M1013 701v7.200" stroke="#4f7a62" stroke-width="2"/>
</svg>
<div class="a t" style="top:694.00px;line-height:20px;font-size:12.5px;color:#8f8f8f;left:1028.5px;letter-spacing:-1.191px;"><span id="t117">100 %</span></div>
<div class="a" style="left:0px;top:65px;width:1px;height:652px;background:#1e7145;"></div>
<div class="a" style="left:1076px;top:0px;width:2px;height:717px;background:#1e7145;"></div>
<div class="a" style="left:0px;top:716px;width:1078px;height:1px;background:#1e7145;"></div>
<div class="a" style="left:7px;top:193px;width:100px;height:244px;background:#fff;border:1px solid #2a8ad4;box-shadow:2px 2px 2px rgba(0,0,0,.42);"></div>
<div class="a t" style="top:195.80px;line-height:20px;font-size:13px;color:#222;left:13px;letter-spacing:-0.629px;"><span id="t118">ЕСЛИ</span></div>
<div class="a t" style="top:217.80px;line-height:20px;font-size:13px;color:#222;left:13px;letter-spacing:0.260px;"><span id="t119">ИЛИ</span></div>
<div class="a t" style="top:239.80px;line-height:20px;font-size:13px;color:#222;left:13px;letter-spacing:-1.031px;"><span id="t120">НЕ</span></div>
<div class="a t" style="top:261.80px;line-height:20px;font-size:13px;color:#222;left:13px;letter-spacing:-0.181px;"><span id="t121">ДЛСТР</span></div>
<div class="a t" style="top:283.80px;line-height:20px;font-size:13px;color:#222;left:13px;letter-spacing:-0.224px;"><span id="t122">СРЗНАЧ</span></div>
<div class="a t" style="top:305.80px;line-height:20px;font-size:13px;color:#222;left:13px;letter-spacing:-1.062px;"><span id="t123">СЧЁТ</span></div>
<div class="a t" style="top:327.80px;line-height:20px;font-size:13px;color:#222;left:13px;letter-spacing:-0.027px;"><span id="t124">СТАНДОТКЛ...</span></div>
<div class="a t" style="top:349.80px;line-height:20px;font-size:13px;color:#222;left:13px;letter-spacing:-0.007px;"><span id="t125">ДОВЕРИТ.СТ..</span></div>
<div class="a t" style="top:371.80px;line-height:20px;font-size:13px;color:#222;left:13px;letter-spacing:-0.136px;"><span id="t126">ДОВЕРИТ.НО.</span></div>
<div class="a t" style="top:393.80px;line-height:20px;font-size:13px;color:#222;left:13px;letter-spacing:-0.460px;"><span id="t127">ДОВЕРИТ</span></div>
<div class="a t" style="top:415.80px;line-height:20px;font-size:13px;color:#222;left:13px;letter-spacing:0.356px;"><span id="t128">Другие функ..</span></div>
<div class="a" style="left:9px;top:217px;width:95px;height:20px;border:1px solid #2a8ad4;"></div>
<svg style="left:0;top:160px" width="120" height="85" viewBox="0 160 120 85">
<rect x="79.600" y="165.400" width="28.800" height="28" rx="8" fill="none" stroke="#fb0000" stroke-width="3.100"/>
<rect x="7.400" y="217.800" width="93.500" height="19.200" rx="8" fill="none" stroke="#fb0000" stroke-width="3.100"/>
</svg>
<div class="a" style="left:276px;top:329px;width:594px;height:304px;background:#f0f0f0;border:1px solid #a6a6a6;box-shadow:0 2px 9px rgba(0,0,0,.24),0 0 2px rgba(0,0,0,.15);"></div>
<div class="a" style="left:277px;top:330px;width:592px;height:29px;background:#fff;"></div>
<div class="a t" style="top:334.00px;line-height:20px;font-size:12px;color:#97a09a;left:284.5px;letter-spacing:0.098px;"><span id="t129">Аргументы функции</span></div>
<div class="a t" style="top:333.50px;line-height:20px;font-size:13px;color:#8a8a8a;left:798px;"><span id="t130">?</span></div>
<svg style="left:840px;top:337px" width="12" height="12" viewBox="0 0 12 12"><path d="M1 1l10 10M11 1l-10 10" stroke="#8a8a8a" stroke-width="1" fill="none"/></svg>
<div class="a" style="left:282px;top:373px;width:581px;height:84px;border:1px solid #dcdcdc;"></div>
<div class="a" style="left:286px;top:366px;width:33px;height:14px;background:#f0f0f0;"></div>
<div class="a t" style="top:363.00px;line-height:20px;font-size:12px;color:#000;left:288.5px;letter-spacing:-1.320px;"><span id="t131">ЕСЛИ</span></div>
<div class="a t" style="top:386.00px;line-height:20px;font-size:12px;color:#000;font-weight:700;right:643.2px;letter-spacing:-0.644px;"><span id="t132">Лог_выражение</span></div>
<div class="a" style="left:444px;top:386px;width:171px;height:20px;background:#fff;border:1px solid #ababab;"></div>
<div class="a" style="left:614px;top:386px;width:22px;height:20px;background:#e1e1e1;border:1px solid #adadad;box-shadow:inset 0 0 0 1px #f4f4f4;"></div>
<svg style="left:614px;top:386px" width="22" height="20" viewBox="0 0 22 20"><path d="M10.500 4.800l-4.200 4.700h3v3.200h2.400v-3.200h3z" fill="#000"/><path d="M6.300 14.700h8.400" stroke="#000" stroke-width="1.400"/></svg>
<div class="a t" style="top:386.70px;line-height:20px;font-size:10.5px;color:#000;font-weight:700;left:646px;"><span id="t133">=</span></div>
<div class="a t" style="top:386.00px;line-height:20px;font-size:12px;color:#8d9c86;left:662px;letter-spacing:0.044px;"><span id="t134">логическое</span></div>
<div class="a t" style="top:409.00px;line-height:20px;font-size:12px;color:#000;right:643.2px;letter-spacing:-0.433px;"><span id="t135">Значение_если_истина</span></div>
<div class="a" style="left:444px;top:409px;width:171px;height:20px;background:#fff;border:1px solid #ababab;"></div>
<div class="a" style="left:614px;top:409px;width:22px;height:20px;background:#e1e1e1;border:1px solid #adadad;box-shadow:inset 0 0 0 1px #f4f4f4;"></div>
<svg style="left:614px;top:409px" width="22" height="20" viewBox="0 0 22 20"><path d="M10.500 4.800l-4.200 4.700h3v3.200h2.400v-3.200h3z" fill="#000"/><path d="M6.300 14.700h8.400" stroke="#000" stroke-width="1.400"/></svg>
<div class="a t" style="top:409.70px;line-height:20px;font-size:10.5px;color:#000;font-weight:700;left:646px;"><span id="t136">=</span></div>
<div class="a t" style="top:409.00px;line-height:20px;font-size:12px;color:#8d9c86;left:662px;letter-spacing:0.153px;"><span id="t137">любое</span></div>
<div class="a t" style="top:432.00px;line-height:20px;font-size:12px;color:#000;right:643.2px;letter-spacing:-0.384px;"><span id="t138">Значение_если_ложь</span></div>
<div class="a" style="left:444px;top:432px;width:171px;height:20px;background:#fff;border:1px solid #ababab;"></div>
<div class="a" style="left:614px;top:432px;width:22px;height:20px;background:#e1e1e1;border:1px solid #adadad;box-shadow:inset 0 0 0 1px #f4f4f4;"></div>
<svg style="left:614px;top:432px" width="22" height="20" viewBox="0 0 22 20"><path d="M10.500 4.800l-4.200 4.700h3v3.200h2.400v-3.200h3z" fill="#000"/><path d="M6.300 14.700h8.400" stroke="#000" stroke-width="1.400"/></svg>
<div class="a t" style="top:432.70px;line-height:20px;font-size:10.5px;color:#000;font-weight:700;left:646px;"><span id="t139">=</span></div>
<div class="a t" style="top:432.00px;line-height:20px;font-size:12px;color:#8d9c86;left:662px;letter-spacing:0.153px;"><span id="t140">любое</span></div>
<div class="a t" style="top:460.00px;line-height:20px;font-size:10.5px;color:#000;font-weight:700;left:646px;"><span id="t141">=</span></div>
<div class="a t" style="top:475.10px;line-height:20px;font-size:12px;color:#000;left:282.5px;letter-spacing:-0.241px;"><span id="t142">Проверяет, выполняется ли условие, и возвращает одно значение, если оно выполняется, и другое</span></div>
<div class="a t" style="top:488.50px;line-height:20px;font-size:12px;color:#000;left:282.5px;letter-spacing:-0.225px;"><span id="t143">значение, если нет.</span></div>
<div class="a t" style="top:512.00px;line-height:20px;font-size:12px;color:#000;font-weight:700;left:392.5px;letter-spacing:-0.606px;"><span id="t144">Лог_выражение</span></div>
<div class="a t" style="top:512.00px;line-height:20px;font-size:12px;color:#000;left:489.5px;letter-spacing:-0.143px;"><span id="t145">любое значение или выражение, которое при вычислении дает</span></div>
<div class="a t" style="top:525.00px;line-height:20px;font-size:12px;color:#000;left:489.5px;letter-spacing:-0.506px;"><span id="t146">значение ИСТИНА или ЛОЖЬ.</span></div>
<div class="a" style="left:282px;top:565px;width:581px;height:1px;background:#dcdcdc;"></div>
<div class="a t" style="top:575.00px;line-height:20px;font-size:12px;color:#000;left:282.5px;letter-spacing:-0.285px;"><span id="t147">Значение:</span></div>
<div class="a t" style="top:604.00px;line-height:20px;font-size:12px;color:#0066cc;left:282.5px;letter-spacing:-0.163px;text-decoration:underline;"><span id="t148">Справка по этой функции</span></div>
<div class="a" style="left:704px;top:602px;width:74px;height:22px;background:#e1e1e1;border:2px solid #0078d7;"></div>
<div class="a t" style="top:603.60px;line-height:20px;font-size:12px;color:#000;left:441px;width:600px;text-align:center;letter-spacing:-0.414px;"><span id="t149">ОК</span></div>
<div class="a" style="left:788px;top:602px;width:74px;height:22px;background:#e1e1e1;border:1px solid #adadad;"></div>
<div class="a t" style="top:603.60px;line-height:20px;font-size:12px;color:#000;left:574px;width:502px;text-align:center;letter-spacing:-0.427px;"><span id="t150">Отмена</span></div>
<svg style="left:440px;top:380px" width="80" height="75" viewBox="440 380 80 75">
<path d="M498.300 445L475.500 408.500" stroke="#fb0000" stroke-width="3.200" fill="none"/>
<path d="M467.400 393.200L485 404.300L476.500 407L469 414.500z" fill="#fb0000"/>
</svg>
</body></html>
